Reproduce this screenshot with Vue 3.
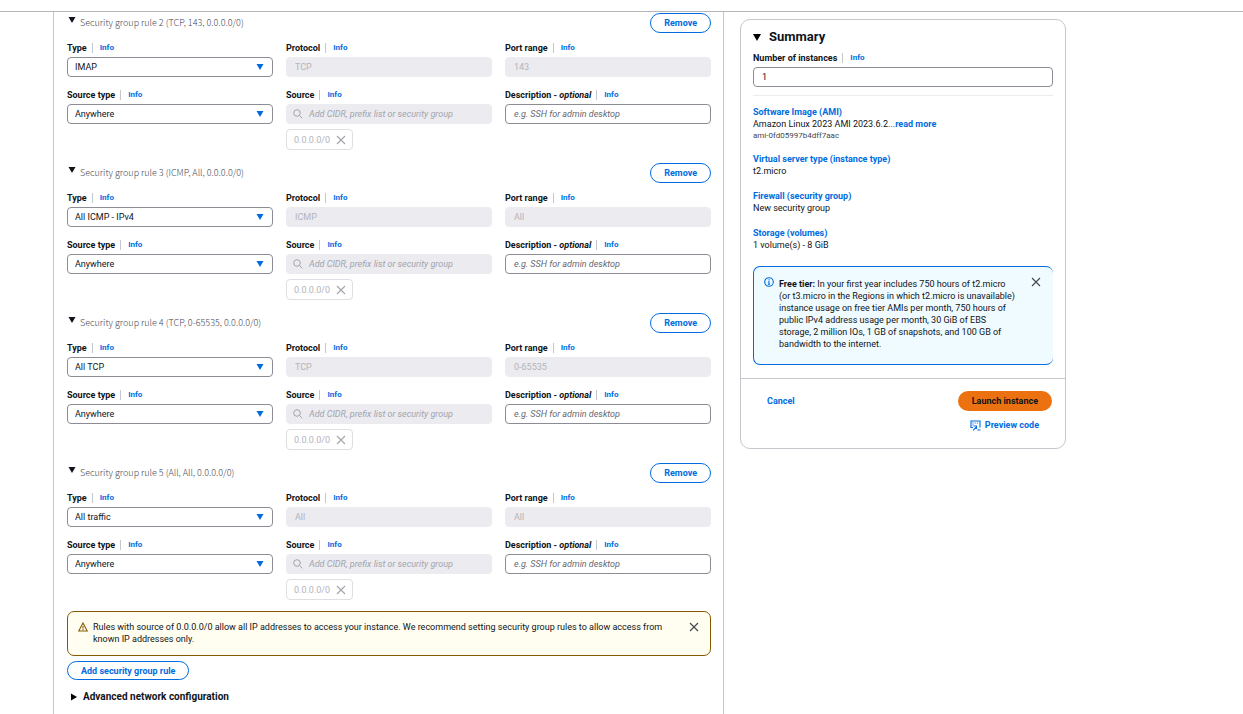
<script setup>
import { ref } from 'vue'

const rules = ref([
  { id: 2, summary: 'TCP, 143, 0.0.0.0/0', type: 'IMAP', protocol: 'TCP', port: '143' },
  { id: 3, summary: 'ICMP, All, 0.0.0.0/0', type: 'All ICMP - IPv4', protocol: 'ICMP', port: 'All' },
  { id: 4, summary: 'TCP, 0-65535, 0.0.0.0/0', type: 'All TCP', protocol: 'TCP', port: '0-65535' },
  { id: 5, summary: 'All, All, 0.0.0.0/0', type: 'All traffic', protocol: 'All', port: 'All' },
])
const types = ['IMAP', 'All ICMP - IPv4', 'All TCP', 'All traffic']
const instances = ref('1')
</script>

<template>
  <div class="page">
    <div class="strip"></div>
    <main class="columns">
      <section class="panel">
        <div class="rules">
          <section v-for="rule in rules" :key="rule.id">
            <header class="rule-head">
              <button class="rule-toggle" type="button">
                <svg class="caret" viewBox="0 0 8 6" width="8" height="6"><path d="M0.5 0h7L4 6z" /></svg>
                <span>Security group rule {{ rule.id }} ({{ rule.summary }})</span>
              </button>
              <button class="pill" type="button">Remove</button>
            </header>
            <div class="fields">
              <div>
                <div class="label-row">
                  <label :for="'type' + rule.id">Type</label><a class="info" href="#">Info</a>
                </div>
                <div class="control">
                  <select :id="'type' + rule.id" v-model="rule.type">
                    <option v-for="t in types" :key="t">{{ t }}</option>
                  </select>
                  <svg class="arrow" viewBox="0 0 8 6" width="8" height="6"><path d="M0.5 0h7L4 6z" /></svg>
                </div>
              </div>
              <div>
                <div class="label-row">
                  <label :for="'protocol' + rule.id">Protocol</label><a class="info" href="#">Info</a>
                </div>
                <input :id="'protocol' + rule.id" type="text" :value="rule.protocol" disabled />
              </div>
              <div>
                <div class="label-row">
                  <label :for="'port' + rule.id">Port range</label><a class="info" href="#">Info</a>
                </div>
                <input :id="'port' + rule.id" type="text" :value="rule.port" disabled />
              </div>
              <div>
                <div class="label-row">
                  <label :for="'stype' + rule.id">Source type</label><a class="info" href="#">Info</a>
                </div>
                <div class="control">
                  <select :id="'stype' + rule.id">
                    <option>Anywhere</option>
                  </select>
                  <svg class="arrow" viewBox="0 0 8 6" width="8" height="6"><path d="M0.5 0h7L4 6z" /></svg>
                </div>
              </div>
              <div>
                <div class="label-row">
                  <label :for="'source' + rule.id">Source</label><a class="info" href="#">Info</a>
                </div>
                <div class="control">
                  <input :id="'source' + rule.id" class="search" type="text" placeholder="Add CIDR, prefix list or security group" disabled />
                  <svg class="lens" viewBox="0 0 10 10" width="10" height="10"><circle cx="4" cy="4" r="3.3" /><path d="M6.4 6.4L9.3 9.3" /></svg>
                </div>
                <div class="token">
                  <span>0.0.0.0/0</span>
                  <button class="close" type="button" aria-label="Remove 0.0.0.0/0" disabled>
                    <svg viewBox="0 0 10 10" width="10" height="10"><path d="M1 1l8 8M9 1l-8 8" /></svg>
                  </button>
                </div>
              </div>
              <div>
                <div class="label-row">
                  <label :for="'desc' + rule.id">Description - <em>optional</em></label><a class="info" href="#">Info</a>
                </div>
                <input :id="'desc' + rule.id" type="text" placeholder="e.g. SSH for admin desktop" />
              </div>
            </div>
          </section>
        </div>

        <div class="alert warning">
          <svg class="alert-icon" viewBox="0 0 10 10" width="10" height="10"><path d="M5 1L9.3 9H0.7z" /><path d="M5 4v2.4M5 7v1" /></svg>
          <p>Rules with source of 0.0.0.0/0 allow all IP addresses to access your instance. We recommend setting security group rules to allow access from known IP addresses only.</p>
          <button class="close" type="button" aria-label="Dismiss warning">
            <svg viewBox="0 0 10 10" width="10" height="10"><path d="M1 1l8 8M9 1l-8 8" /></svg>
          </button>
        </div>
        <button class="pill add" type="button">Add security group rule</button>
        <button class="advanced" type="button">
          <svg viewBox="0 0 6 8" width="6" height="8"><path d="M0 0.5v7L6 4z" /></svg>
          <span>Advanced network configuration</span>
        </button>
      </section>

      <aside class="card">
        <div class="card-body">
          <h2>
            <svg viewBox="0 0 8 7" width="8" height="7"><path d="M0 0h8L4 7z" /></svg>
            <span>Summary</span>
          </h2>
          <div class="label-row">
            <label for="instances">Number of instances</label><a class="info" href="#">Info</a>
          </div>
          <input id="instances" v-model="instances" type="text" />
          <hr />
          <dl>
            <div>
              <dt><a href="#">Software Image (AMI)</a></dt>
              <dd>Amazon Linux 2023 AMI 2023.6.2...<a href="#">read more</a></dd>
              <dd class="small">ami-0fd05997b4dff7aac</dd>
            </div>
            <div>
              <dt><a href="#">Virtual server type (instance type)</a></dt>
              <dd>t2.micro</dd>
            </div>
            <div>
              <dt><a href="#">Firewall (security group)</a></dt>
              <dd>New security group</dd>
            </div>
            <div>
              <dt><a href="#">Storage (volumes)</a></dt>
              <dd>1 volume(s) - 8 GiB</dd>
            </div>
          </dl>
          <div class="alert tier">
            <svg class="alert-icon" viewBox="0 0 10 10" width="10" height="10"><circle cx="5" cy="5" r="4.3" /><path d="M5 2.2v1.2M4.2 4.7H5v2.6M4 7.3h2" /></svg>
            <p><b>Free tier:</b> In your first year includes 750 hours of t2.micro (or t3.micro in the Regions in which t2.micro is unavailable) instance usage on free tier AMIs per month, 750 hours of public IPv4 address usage per month, 30 GiB of EBS storage, 2 million IOs, 1 GB of snapshots, and 100 GB of bandwidth to the internet.</p>
            <button class="close" type="button" aria-label="Dismiss free tier notice">
              <svg viewBox="0 0 10 10" width="10" height="10"><path d="M1 1l8 8M9 1l-8 8" /></svg>
            </button>
          </div>
        </div>
        <footer class="card-foot">
          <button class="link" type="button">Cancel</button>
          <div class="actions">
            <button class="launch" type="button">Launch instance</button>
            <button class="link preview" type="button">
              <svg viewBox="0 0 11 11" width="11" height="11"><path d="M3 7.5H1V1h9v6.5" /><path d="M2.5 3h1M4.7 3h1M6.9 3h1M2.5 5h1" /><path d="M3 10.3L6 7.4M3.6 6h2.9v3M7.2 10h3.3" /></svg>
              <span>Preview code</span>
            </button>
          </div>
        </footer>
      </aside>
    </main>
  </div>
</template>

<style>
body {
  margin: 0;
  background: #fff;
}
</style>

<style scoped>
.page {
  height: 100vh;
  overflow: hidden;
  display: flex;
  flex-direction: column;
  font: 9px/12px Roboto, "Noto Sans", sans-serif;
  color: #0f141a;
}
* {
  box-sizing: border-box;
}
button,
input,
select {
  font: inherit;
  color: inherit;
  margin: 0;
}
button {
  background: none;
  border: 0;
  padding: 0;
}
a {
  color: #006ce0;
  font-weight: 700;
  text-decoration: none;
}
svg {
  display: block;
  flex: none;
}
.strip {
  flex: none;
  height: 12px;
  border-bottom: 1px solid #b4b4bb;
}
.columns {
  flex: 1;
  display: grid;
  grid-template-columns: 53fr 671fr 16px 326fr 177fr;
  align-items: start;
}
.panel {
  grid-column: 2;
  border: solid #c6c6cd;
  border-width: 0 1px;
  padding: 1px 12px 24px 13px;
}
.rules {
  display: grid;
  gap: 13px;
}
.rule-head {
  display: flex;
  justify-content: space-between;
  align-items: center;
  margin-bottom: 9px;
}
.rule-toggle {
  display: flex;
  gap: 4px;
  padding-left: 1px;
  font-family: "Noto Sans CJK SC", Roboto, sans-serif;
  font-weight: 300;
  color: #424650;
}
.rule-toggle .caret {
  fill: #0f141a;
}
.pill {
  height: 20px;
  padding: 0 13px;
  border: 1px solid #006ce0;
  border-radius: 10px;
  background: #fff;
  color: #006ce0;
  font-weight: 700;
}
.fields {
  display: grid;
  grid-template-columns: repeat(3, minmax(0, 1fr));
  gap: 12px 13px;
}
.label-row {
  display: flex;
  align-items: center;
  height: 12px;
  margin-bottom: 3px;
  font-weight: 700;
}
.info {
  margin-left: 5px;
  padding-left: 7px;
  border-left: 1px solid #c6c6cd;
  font-size: 8px;
  line-height: 10px;
}
input,
select {
  display: block;
  width: 100%;
  height: 20px;
  padding: 0 8px;
  border: 1px solid #8c8c94;
  border-radius: 4px;
  background: #fff;
  appearance: none;
}
select {
  padding: 0 7px;
}
input:disabled {
  border-color: #ebebf0;
  background: #ebebf0;
  color: #b4b4bb;
}
input::placeholder {
  color: #656871;
  font-style: italic;
  opacity: 1;
}
input:disabled::placeholder {
  color: #a4a4ad;
}
.control {
  display: grid;
  align-items: center;
}
.control > * {
  grid-area: 1 / 1;
}
.arrow {
  justify-self: end;
  margin-right: 9px;
  fill: #006ce0;
  pointer-events: none;
}
.search {
  padding-left: 22px;
}
.lens {
  margin-left: 7px;
  fill: none;
  stroke: #a4a4ad;
  stroke-width: 1;
}
.token {
  display: inline-flex;
  align-items: center;
  gap: 6px;
  height: 21px;
  margin-top: 5px;
  padding: 0 6px 0 7px;
  border: 1px solid #dedee3;
  border-radius: 4px;
  color: #b4b4bb;
  vertical-align: top;
}
.close svg {
  fill: none;
  stroke: #424650;
  stroke-width: 1.1;
}
.token .close svg {
  stroke: #a4a4ad;
}
.alert {
  display: flex;
  align-items: flex-start;
  border: 1px solid;
  border-radius: 7px;
}
.alert p {
  flex: 1;
  margin: 0;
  color: #0f141a;
}
.alert-icon {
  fill: none;
  stroke: currentColor;
  stroke-width: 1.1;
}
.warning {
  min-height: 45px;
  margin-top: 11px;
  padding: 9px 11px 9px 10px;
  border-color: #855900;
  background: #fffef0;
  color: #855900;
}
.warning p {
  padding: 0 22px 0 5px;
}
.warning .alert-icon,
.warning .close {
  margin-top: 1px;
}
.add {
  margin-top: 5px;
  height: 19px;
}
.advanced {
  display: flex;
  align-items: center;
  gap: 6px;
  margin-top: 11px;
  padding-left: 4px;
  font-size: 10px;
  font-weight: 700;
}
.card {
  grid-column: 4;
  margin-top: 7px;
  border: 1px solid #c6c6cd;
  border-radius: 10px;
}
.card-body {
  padding: 9px 12px 13px;
}
h2 {
  display: flex;
  align-items: center;
  gap: 8px;
  margin: 0 0 7px;
  font-size: 13px;
  font-weight: 700;
  line-height: 16px;
}
hr {
  margin: 8px 0 10px;
  border: 0;
  border-top: 1px solid #ebebf0;
}
dl {
  display: grid;
  gap: 12px;
  margin: 0;
}
dd {
  margin: 0;
  line-height: 13px;
}
dd.small {
  font-size: 8px;
  line-height: 10px;
  color: #424650;
}
.tier {
  margin-top: 14px;
  min-height: 99px;
  padding: 10px 12px 10px 10px;
  border-color: #006ce0;
  border-right: 0;
  background: #f0fbff;
  color: #006ce0;
}
.tier p {
  margin-top: 1px;
  padding: 0 14px 0 5px;
}
.card-foot {
  display: flex;
  justify-content: space-between;
  align-items: flex-start;
  padding: 12px 13px 13px 26px;
  border-top: 1px solid #c6c6cd;
}
.link {
  height: 20px;
  color: #006ce0;
  font-weight: 700;
}
.actions {
  display: flex;
  flex-direction: column;
  align-items: flex-end;
  gap: 4px;
}
.launch {
  height: 20px;
  padding: 0 14px;
  border-radius: 10px;
  background: #ec7211;
  font-weight: 700;
}
.preview {
  display: flex;
  align-items: center;
  gap: 4px;
  margin-right: 13px;
}
.preview svg {
  fill: none;
  stroke: currentColor;
  stroke-width: 1.1;
}
</style>
